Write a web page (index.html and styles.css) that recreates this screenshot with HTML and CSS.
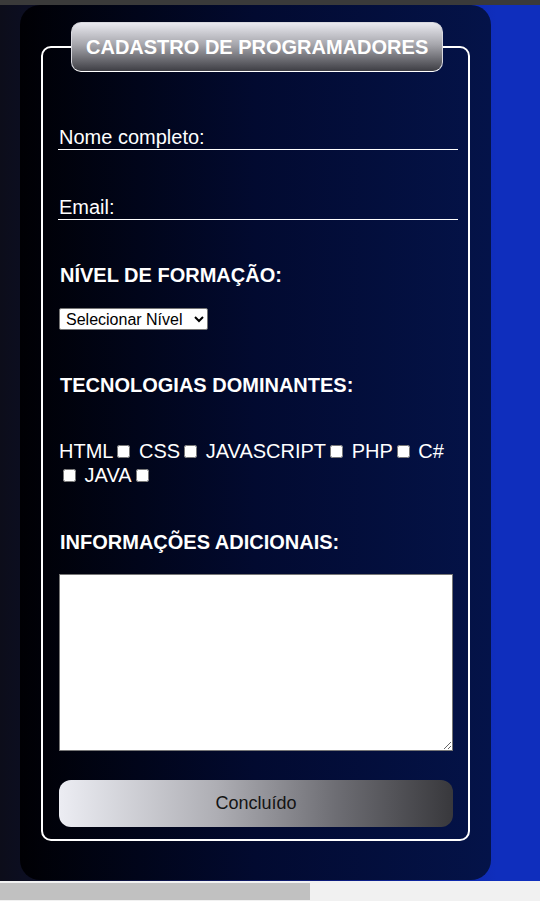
FILE: index.html
```html
<!DOCTYPE html>
<html lang="pt-BR">
<head>
<meta charset="utf-8">
<title>Cadastro de Programadores</title>
<link rel="stylesheet" href="styles.css">
</head>
<body>
<div class="window">
  <div class="topbar"></div>
  <div class="page">
    <div class="card">
      <form class="form">
        <fieldset class="box">
          <legend class="title">CADASTRO DE PROGRAMADORES</legend>
          <input class="line-input first" type="text" placeholder="Nome completo:">
          <input class="line-input second" type="email" placeholder="Email:">
          <h3 class="heading h-level">NÍVEL DE FORMAÇÃO:</h3>
          <select class="level">
            <option>Selecionar Nível</option>
          </select>
          <h3 class="heading h-tech">TECNOLOGIAS DOMINANTES:</h3>
          <div class="techs">HTML<input type="checkbox" class="chk"> CSS<input type="checkbox" class="chk"> JAVASCRIPT<input type="checkbox" class="chk"> PHP<input type="checkbox" class="chk"> C#<input type="checkbox" class="chk"> JAVA<input type="checkbox" class="chk"></div>
          <h3 class="heading h-info">INFORMAÇÕES ADICIONAIS:</h3>
          <textarea class="info"></textarea>
          <button type="button" class="done">Concluído</button>
        </fieldset>
      </form>
    </div>
  </div>
  <div class="hscroll"><div class="thumb"></div></div>
</div>
</body>
</html>
```

FILE: styles.css
```css
html, body {
  margin: 0;
  padding: 0;
}
body {
  background: #3a3a3a;
  font-family: "Liberation Sans", Arial, sans-serif;
}
.window {
  width: 540px;
  height: 901px;
  display: flex;
  flex-direction: column;
  overflow: hidden;
}
.topbar {
  height: 5px;
  background: #3a3a3a;
  flex: none;
}
.page {
  height: 876px;
  flex: none;
  background: linear-gradient(to right, #0c0d1a 0%, #0b1a78 60%, #0f2ebd 92%);
  padding-left: 20px;
  box-sizing: border-box;
}
.card {
  width: 471px;
  height: 875px;
  border-radius: 20px;
  background: linear-gradient(to right, #000004 0%, #020a30 50%, #041349 100%);
  padding: 17px 21px 0 21px;
  box-sizing: border-box;
}
.form {
  margin: 0;
}
.box {
  margin: 0;
  width: 429px;
  box-sizing: border-box;
  border: 2px solid #ffffff;
  border-radius: 10px;
  padding: 0 16px 12px 16px;
  min-inline-size: 0;
}
.title {
  margin-left: 12px;
  height: 50px;
  box-sizing: border-box;
  padding: 0 14px;
  border: 1px solid #d8d8de;
  border-bottom-color: #ffffff;
  border-radius: 10px;
  background: linear-gradient(to bottom, #e9e9ef 0%, #a6a6ac 45%, #3e3e44 100%);
  color: #ffffff;
  font-weight: bold;
  font-size: 20px;
  line-height: 48px;
  white-space: nowrap;
}
.line-input {
  display: block;
  width: 400px;
  height: 25px;
  box-sizing: border-box;
  margin-left: -1px;
  padding: 0 0 0 1px;
  border: none;
  border-bottom: 1px solid #ffffff;
  background: transparent;
  color: #ffffff;
  font-family: "Liberation Sans", Arial, sans-serif;
  font-size: 20px;
  outline: none;
}
.line-input::placeholder {
  color: #ffffff;
  opacity: 1;
}
.first {
  margin-top: 53px;
}
.second {
  margin-top: 45px;
}
.heading {
  margin: 43px 0 0 1px;
  font-size: 20px;
  line-height: 24px;
  height: 24px;
  color: #ffffff;
  font-weight: bold;
}
.level {
  display: block;
  margin-top: 21px;
  height: 22px;
  width: 149px;
  font-family: "Liberation Sans", Arial, sans-serif;
  font-size: 16px;
  background: #ffffff;
  color: #000000;
  border: 1px solid #767676;
  border-radius: 2px;
  padding: 0 0 0 2px;
}
.techs {
  margin-top: 42px;
  color: #ffffff;
  font-size: 20px;
  line-height: 24px;
  width: 393px;
}
.chk {
  width: 13px;
  height: 13px;
  margin: 3px 3px 3px 4px;
}
.info {
  display: block;
  margin-top: 20px;
  width: 394px;
  height: 177px;
  box-sizing: border-box;
  border: 1px solid #767676;
  background: #ffffff;
  resize: both;
}
.done {
  display: block;
  margin-top: 29px;
  width: 394px;
  height: 47px;
  border: none;
  border-radius: 12px;
  background: linear-gradient(to right, #ecedf3 0%, #aeaeb4 40%, #6e6e74 70%, #38383c 100%);
  color: #141414;
  font-family: "Liberation Sans", Arial, sans-serif;
  font-size: 18px;
}
.hscroll {
  height: 20px;
  flex: none;
  background: #f1f1f1;
  padding-top: 2px;
  box-sizing: border-box;
}
.thumb {
  width: 310px;
  height: 17px;
  background: #c1c1c1;
}
```
